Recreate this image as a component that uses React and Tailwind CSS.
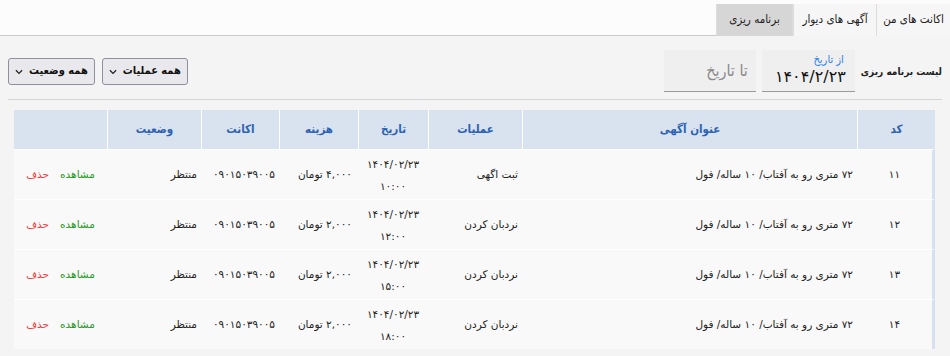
import { useState } from 'react';

const COLS = [
  { key: 'code', label: 'کد', w: 'w-[78px]', align: 'justify-center' },
  { key: 'title', label: 'عنوان آگهی', w: 'w-[335px]', align: 'justify-start pr-1' },
  { key: 'op', label: 'عملیات', w: 'w-[94px]', align: 'justify-start pr-1' },
  { key: 'date', label: 'تاریخ', w: 'w-[70px]', align: 'justify-center' },
  { key: 'cost', label: 'هزینه', w: 'w-[79px]', align: 'justify-start pr-1.5' },
  { key: 'account', label: 'اکانت', w: 'w-[78px]', align: 'justify-start pr-1' },
  { key: 'status', label: 'وضعیت', w: 'w-[94px]', align: 'justify-start pr-1' },
  { key: 'actions', label: '', w: 'w-[93px]', align: 'justify-center' },
];

const ROWS = [
  { code: '۱۱', title: '۷۲ متری رو به آفتاب/ ۱۰ ساله/ فول', op: 'ثبت اگهی', date: '۱۴۰۴/۰۲/۲۳', time: '۱۰:۰۰', cost: '۴,۰۰۰ تومان' },
  { code: '۱۲', title: '۷۲ متری رو به آفتاب/ ۱۰ ساله/ فول', op: 'نردبان کردن', date: '۱۴۰۴/۰۲/۲۳', time: '۱۲:۰۰', cost: '۲,۰۰۰ تومان' },
  { code: '۱۳', title: '۷۲ متری رو به آفتاب/ ۱۰ ساله/ فول', op: 'نردبان کردن', date: '۱۴۰۴/۰۲/۲۳', time: '۱۵:۰۰', cost: '۲,۰۰۰ تومان' },
  { code: '۱۴', title: '۷۲ متری رو به آفتاب/ ۱۰ ساله/ فول', op: 'نردبان کردن', date: '۱۴۰۴/۰۲/۲۳', time: '۱۸:۰۰', cost: '۲,۰۰۰ تومان' },
];

const TABS = ['اکانت های من', 'آگهی های دیوار', 'برنامه ریزی'];

const condensed = { fontFamily: '"DejaVu Sans Condensed", "DejaVu Sans", sans-serif' };

function Select({ label }) {
  return (
    <div style={condensed} className="flex items-center gap-1.5 h-[27px] pr-1.5 pl-1.5 bg-[#e9e9ed] border border-[#8f8f9d] rounded-[3px] text-[11px] font-bold text-[#111] whitespace-nowrap">
      <span>{label}</span>
      <svg width="8" height="6" viewBox="0 0 9 6" className="mt-0.5 shrink-0">
        <path d="M1 1 L4.5 4.5 L8 1" stroke="#222" strokeWidth="1.4" fill="none" />
      </svg>
    </div>
  );
}

function Cell({ col, children }) {
  return (
    <div className={`flex items-center ${col.w} ${col.align} shrink-0 whitespace-nowrap`}>{children}</div>
  );
}

export default function App() {
  const [tab, setTab] = useState(2);

  return (
    <div dir="rtl" className="w-[950px] h-[356px] overflow-hidden bg-[#f4f4f4] text-[#222]" style={{ fontFamily: '"DejaVu Sans", sans-serif' }}>
      <div style={condensed} className="flex h-[36px] pt-[4px] border-b border-[#c9c9c9] bg-[#fcfcfc]">
        {TABS.map((t, i) => (
          <button
            key={t}
            onClick={() => setTab(i)}
            className={`h-[32px] text-[11.5px] whitespace-nowrap border-l border-[#dcdcdc] ${
              tab === i ? 'bg-[#d6d6d6] border-x border-[#c4c4c4]' : 'bg-[#f6f6f6]'
            } ${i === 0 ? 'w-[74px]' : i === 1 ? 'w-[83px]' : 'w-[77px]'}`}
          >
            {t}
          </button>
        ))}
      </div>

      <div className="flex items-center justify-between px-2 mt-[14px] h-[42px]">
        <div className="flex items-center gap-[6px]">
          <span style={condensed} className="text-[10px] font-bold whitespace-nowrap shrink-0">لیست برنامه ریزی</span>
          <div className="w-[93px] h-[42px] bg-[#efefef] border-b border-[#9a9a9a] flex flex-col justify-center pr-[9px]">
            <span style={condensed} className="text-[11px] text-[#2f80ed] leading-[12px] pr-[2px]">از تاریخ</span>
            <span className="text-[16px] leading-[21px] text-[#111]">۱۴۰۴/۲/۲۳</span>
          </div>
          <div style={condensed} className="w-[92px] h-[42px] bg-[#efefef] border-b border-[#9a9a9a] flex items-center pr-[8px] text-[16px] text-[#8a8a8a]">
            تا تاریخ
          </div>
        </div>
        <div className="flex items-center gap-[7px]">
          <Select label="همه عملیات" />
          <Select label="همه وضعیت" />
        </div>
      </div>

      <div className="mx-2 mt-[7px] border-t border-[#d4d4d4]" />

      <div className="mr-[15px] ml-[14px] mt-[10px] w-[921px]">
        <div style={condensed} className="flex h-[39px] bg-[#d9e3ef] text-[11.5px] font-bold text-[#2d62b4]">
          {COLS.map((c, i) => (
            <div key={c.key} className={`flex items-center justify-center ${c.w} shrink-0 ${i < COLS.length - 1 ? 'border-l border-white' : ''}`}>
              {c.label}
            </div>
          ))}
        </div>
        {ROWS.map((r) => (
          <div key={r.code} className="flex h-[50px] bg-[#f9f9f9] border-t border-white border-r-[3px] border-r-[#d5e0f0] text-[10.5px] text-[#222]">
            <Cell col={{ ...COLS[0], w: 'w-[75px]' }}>{r.code}</Cell>
            <Cell col={COLS[1]}>{r.title}</Cell>
            <Cell col={COLS[2]}>{r.op}</Cell>
            <Cell col={COLS[3]}>
              <div className="flex flex-col items-center leading-[22px]">
                <span>{r.date}</span>
                <span>{r.time}</span>
              </div>
            </Cell>
            <Cell col={COLS[4]}>{r.cost}</Cell>
            <Cell col={COLS[5]}>۰۹۰۱۵۰۳۹۰۰۵</Cell>
            <Cell col={COLS[6]}>منتظر</Cell>
            <Cell col={COLS[7]}>
              <div className="flex gap-[11px]">
                <span className="text-[#2a9a2a]">مشاهده</span>
                <span className="text-[#f03c3c]">حذف</span>
              </div>
            </Cell>
          </div>
        ))}
      </div>
    </div>
  );
}
